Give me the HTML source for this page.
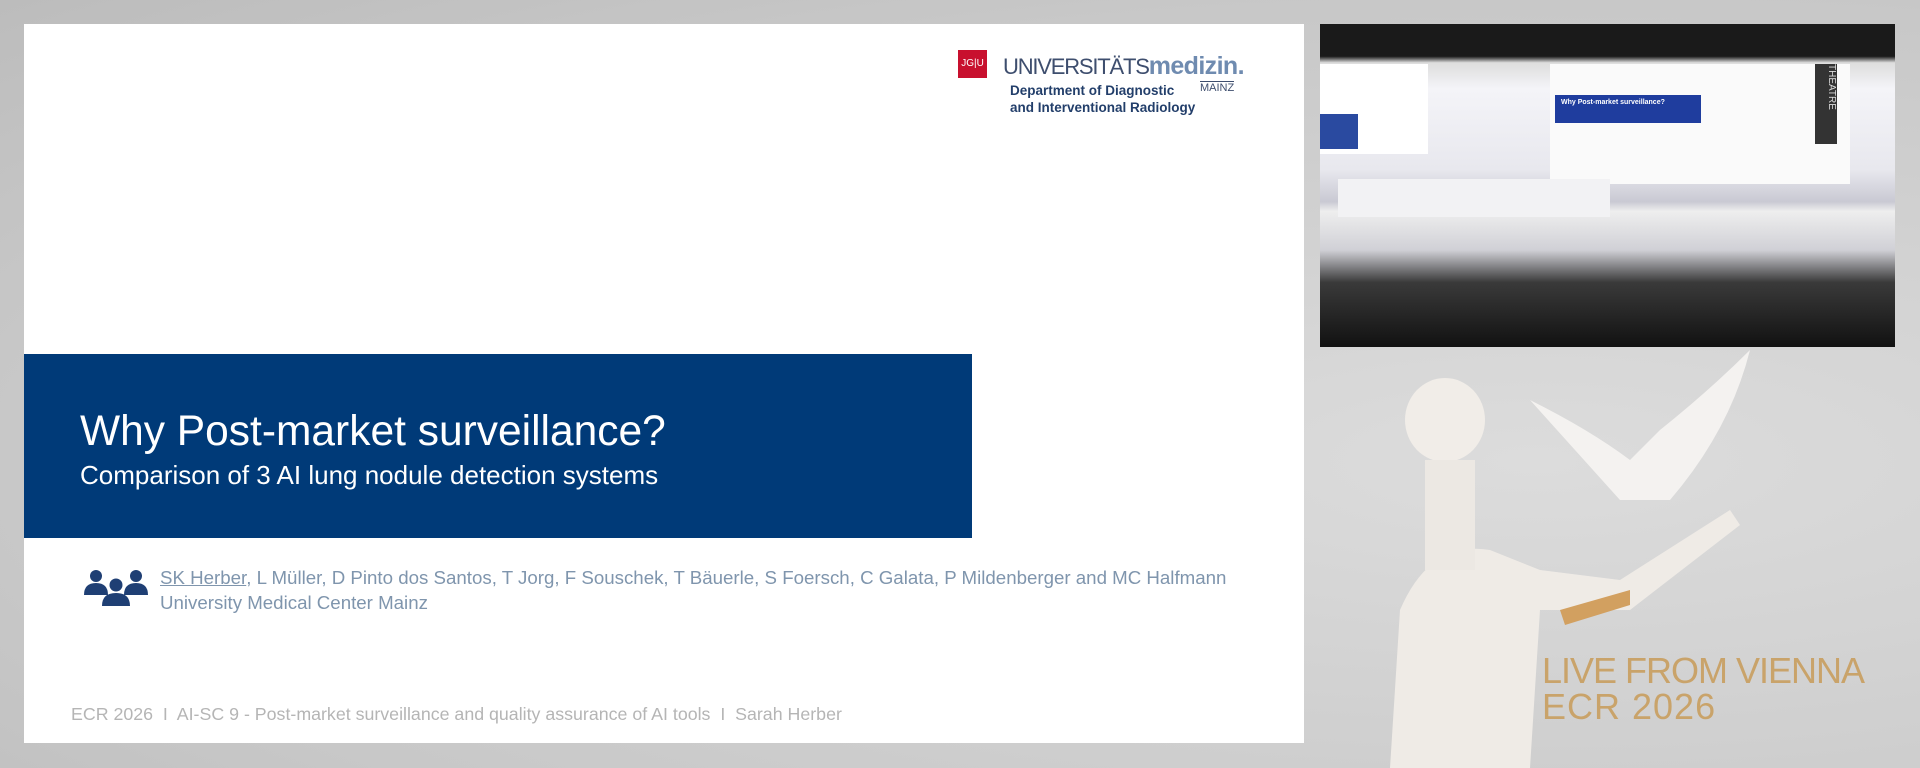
<!DOCTYPE html>
<html><head><meta charset="utf-8"><style>
body{margin:0;width:1920px;height:768px;overflow:hidden;background:radial-gradient(ellipse at 80% 60%,#dcdcdc,#c8c8c8 70%,#bcbcbc);font-family:"Liberation Sans",sans-serif;position:relative}
.slide{position:absolute;left:24px;top:24px;width:1280px;height:719px;background:#fff}
.band{position:absolute;left:0;top:330px;width:948px;height:184px;background:#003a78;color:#fff}
.a{position:absolute;color:#7f95ad;font-size:18.7px;left:136px}
.video{position:absolute;left:1320px;top:24px;width:575px;height:323px;background:linear-gradient(#1a1a1a 0 10%,#ddd 12%,#f4f4f8 20%,#e8e8ee 45%,#c9c9d3 55%,#eee 58%,#d0d0d6 70%,#3a3a3a 80%,#111 100%)}
</style></head><body>
<div class="slide">
 <div style="position:absolute;left:934px;top:26px;width:29px;height:28px;background:#c8102e;color:#fff;font-size:10px;line-height:28px;text-align:center">JG|U</div>
 <div style="position:absolute;left:979px;top:28px;font-size:22px;color:#3e4e6e;letter-spacing:-1.2px">UNIVERSITÄTS<b style="color:#6f8bb0;font-size:25px;letter-spacing:-0.6px">medizin.</b></div>
 <div style="position:absolute;left:986px;top:58px;font-size:13.5px;font-weight:bold;color:#223e6a;line-height:17px">Department of Diagnostic<br>and Interventional Radiology</div>
 <div style="position:absolute;left:1176px;top:57px;font-size:11px;color:#3e4e6e;border-top:1px solid #3e4e6e">MAINZ</div>
 <div class="band">
  <div style="position:absolute;left:56px;top:54px;font-size:42.5px">Why Post-market surveillance?</div>
  <div style="position:absolute;left:56px;top:106px;font-size:26px">Comparison of 3 AI lung nodule detection systems</div>
 </div>
 <svg style="position:absolute;left:60px;top:544px" width="64" height="42" viewBox="0 0 64 42" fill="#1f3f74">
  <circle cx="12" cy="8" r="6"/><path d="M0 27q0-12 12-12t12 12z"/>
  <circle cx="52" cy="8" r="6"/><path d="M40 27q0-12 12-12t12 12z"/>
  <circle cx="32" cy="17" r="6.5"/><path d="M18 38q0-13 14-13t14 13z"/>
 </svg>
 <div class="a" style="top:543px"><u>SK Herber</u>, L Müller, D Pinto dos Santos, T Jorg, F Souschek, T Bäuerle, S Foersch, C Galata, P Mildenberger and MC Halfmann</div>
 <div class="a" style="top:568px">University Medical Center Mainz</div>
 <div style="position:absolute;left:47px;top:680px;font-size:17.8px;color:#b5b5b5">ECR 2026 &nbsp;I&nbsp; AI-SC 9 - Post-market surveillance and quality assurance of AI tools &nbsp;I&nbsp; Sarah Herber</div>
</div>
<div class="video">
 <div style="position:absolute;left:0;top:40px;width:108px;height:90px;background:#fff"></div>
 <div style="position:absolute;left:0;top:90px;width:38px;height:35px;background:#2a4aa0"></div>
 <div style="position:absolute;left:230px;top:40px;width:300px;height:120px;background:#fafafa"></div>
 <div style="position:absolute;left:235px;top:71px;width:146px;height:28px;background:#1f3d9e;color:#fff;font-size:7px;padding:4px 6px;box-sizing:border-box"><b>Why Post-market surveillance?</b></div>
 <div style="position:absolute;left:18px;top:155px;width:272px;height:38px;background:#f2f2f4"></div>
 <div style="position:absolute;left:495px;top:40px;width:22px;height:80px;background:#333;color:#ddd;font-size:10px;writing-mode:vertical-rl">THEATRE</div>
</div>
<svg style="position:absolute;left:1330px;top:350px" width="500" height="418">
 <ellipse cx="115" cy="70" rx="40" ry="42" fill="#f1ede8"/>
 <path d="M60 418 L70 260 Q100 190 160 200 L210 220 L290 230 L400 160 L410 175 L300 260 L210 260 L200 418z" fill="#efebe6"/>
 <path d="M230 260 L300 240 L300 255 L235 275z" fill="#d2a060"/>
 <path d="M200 50 Q260 80 300 110 L330 80 Q380 40 420 0 Q400 80 340 150 L290 150z" fill="#f4f2f0"/>
 <rect x="95" y="110" width="50" height="110" fill="#ece8e3"/>
</svg>
<div style="position:absolute;left:1542px;top:653px;font-size:36px;color:#c9a36a;letter-spacing:-1px;line-height:36px">LIVE FROM VIENNA<br><span style="letter-spacing:1px">ECR 2026</span></div>
</body></html>
